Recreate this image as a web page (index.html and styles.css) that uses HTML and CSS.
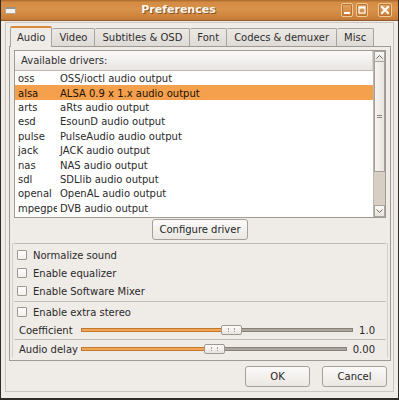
FILE: index.html
```html
<!DOCTYPE html>
<html>
<head>
<meta charset="utf-8">
<link rel="stylesheet" href="styles.css">
</head>
<body>
<div class="window">
  <div class="titlebar">
    <div class="win-icon"></div>
    <div class="title">Preferences</div>
    <div class="tb-buttons">
      <span class="tb-btn tb-min"><svg width="10" height="12" viewBox="0 0 10 12"><rect x="2" y="8" width="6" height="2" fill="#fff"/></svg></span>
      <span class="tb-btn tb-max"><svg width="10" height="12" viewBox="0 0 10 12"><rect x="2" y="3" width="6" height="6" fill="none" stroke="#fff" stroke-width="1.2"/><rect x="2" y="3" width="6" height="1.6" fill="#fff"/></svg></span>
      <span class="tb-btn tb-close"><svg width="12" height="12" viewBox="0 0 12 12"><path d="M3 3 L9 9 M9 3 L3 9" stroke="#fff" stroke-width="2" stroke-linecap="square"/></svg></span>
    </div>
  </div>
  <div class="client">
    <div class="frame">
      <div class="notebook">
        <div class="tabs">
          <div class="tab active">Audio</div>
          <div class="tab">Video</div>
          <div class="tab">Subtitles &amp; OSD</div>
          <div class="tab">Font</div>
          <div class="tab">Codecs &amp; demuxer</div>
          <div class="tab">Misc</div>
        </div>
        <div class="pane">
          <div class="list">
            <div class="list-main">
              <div class="list-header">Available drivers:</div>
              <div class="row"><span class="c1">oss</span><span class="c2">OSS/ioctl audio output</span></div>
              <div class="row selected"><span class="c1">alsa</span><span class="c2">ALSA 0.9 x 1.x audio output</span></div>
              <div class="row"><span class="c1">arts</span><span class="c2">aRts audio output</span></div>
              <div class="row"><span class="c1">esd</span><span class="c2">EsounD audio output</span></div>
              <div class="row"><span class="c1">pulse</span><span class="c2">PulseAudio audio output</span></div>
              <div class="row"><span class="c1">jack</span><span class="c2">JACK audio output</span></div>
              <div class="row"><span class="c1">nas</span><span class="c2">NAS audio output</span></div>
              <div class="row"><span class="c1">sdl</span><span class="c2">SDLlib audio output</span></div>
              <div class="row"><span class="c1">openal</span><span class="c2">OpenAL audio output</span></div>
              <div class="row"><span class="c1">mpegpes</span><span class="c2">DVB audio output</span></div>
            </div>
            <div class="scrollbar">
              <div class="sb-btn sb-up"><svg width="7" height="4" viewBox="0 0 7 4"><path d="M0.5 3.5 L3.5 0.5 L6.5 3.5" fill="none" stroke="#6b665f" stroke-width="1"/></svg></div>
              <div class="sb-thumb"><span class="grip"></span></div>
              <div class="sb-trough"></div>
              <div class="sb-btn sb-down"><svg width="7" height="4" viewBox="0 0 7 4"><path d="M0.5 0.5 L3.5 3.5 L6.5 0.5" fill="none" stroke="#6b665f" stroke-width="1"/></svg></div>
            </div>
          </div>
          <div class="btn-row"><button class="btn">Configure driver</button></div>
          <div class="lower">
            <div class="group g1">
              <div class="check-row"><span class="check"></span>Normalize sound</div>
              <div class="check-row"><span class="check"></span>Enable equalizer</div>
              <div class="check-row"><span class="check"></span>Enable Software Mixer</div>
            </div>
            <div class="group g2">
              <div class="check-row"><span class="check"></span>Enable extra stereo</div>
              <div class="slider-row">
                <span class="s-label">Coefficient</span>
                <div class="track"><div class="fill" style="width:55%"></div><div class="thumb" style="left:calc(55% - 10px)"><span class="tgrip"></span></div></div>
                <span class="s-value">1.0</span>
              </div>
            </div>
            <div class="group g3">
              <div class="slider-row">
                <span class="s-label">Audio delay</span>
                <div class="track"><div class="fill" style="width:50%"></div><div class="thumb" style="left:calc(50% - 10px)"><span class="tgrip"></span></div></div>
                <span class="s-value">0.00</span>
              </div>
            </div>
          </div>
        </div>
      </div>
      <div class="actions">
        <button class="btn act">OK</button>
        <button class="btn act">Cancel</button>
      </div>
    </div>
  </div>
</div>
</body>
</html>
```
FILE: styles.css
```css
* { box-sizing: border-box; }
html, body { margin: 0; padding: 0; }
body {
  width: 399px; height: 400px; overflow: hidden;
  background: #efebe7;
  font-family: "DejaVu Sans", "Liberation Sans", sans-serif;
  font-size: 10px; color: #2a2a2a;
}
.window {
  width: 399px; height: 400px;
  display: flex; flex-direction: column;
  border: 1px solid #2f2a25; border-top: none; border-bottom-width: 2px;
  background: #efebe7;
}
.titlebar {
  height: 21px; flex: none;
  display: flex; align-items: center;
  background: linear-gradient(#a9682c 0, #d48c44 12%, #d99249 45%, #cf8540 80%, #c17a36 100%);
  border-bottom: 1px solid #8d5b2b;
}
.win-icon {
  width: 11px; height: 7px; margin-left: 4px; margin-top: 1px;
  background: #f4f2ef; border: 1px solid #b9a58e; border-top: 2px solid #9a9086;
}
.title {
  flex: 1; text-align: center;
  font-weight: bold; font-size: 11px; color: #fbf6ee;
  text-shadow: 1px 1px 0 #8a5522;
  padding-bottom: 1px;
}
.tb-buttons { display: flex; align-items: center; margin-right: 6px; }
.tb-btn {
  display: flex; align-items: center; justify-content: center;
  height: 14px; width: 12px;
  border: 1px solid #f1c996; border-radius: 2px;
  background: linear-gradient(#e3a562, #c87e37);
  box-shadow: inset 0 0 0 1px #b8742f;
}
.tb-max { margin-left: 3px; }
.tb-close { margin-left: 10px; width: 14px; }
.tb-btn svg { display: block; }

.client {
  flex: 1; display: flex; flex-direction: column;
  padding: 1px 4px 6px 4px;
}
.frame {
  flex: 1; display: flex; flex-direction: column;
  border: 1px solid #cbc6c0;
}
.notebook { padding: 3px 2px 0 3px; }
.tabs {
  height: 20px; display: flex; align-items: flex-end;
  padding-left: 1px; position: relative; z-index: 1;
}
.tab {
  height: 18px; padding: 0 7px;
  display: flex; align-items: center;
  border: 1px solid #a8a39d; border-bottom: none; border-left: none;
  border-radius: 2px 2px 0 0;
  background: linear-gradient(#ece8e4, #dedad5);
  color: #2f2f2f; white-space: nowrap;
}
.tab.active {
  height: 21px; margin-bottom: -1px;
  border-left: 1px solid #a8a39d;
  border-top: 2px solid #d7893c;
  background: #efebe7;
  padding: 0 6px;
}
.pane {
  height: 315px;
  border: 1px solid #9e9993;
  background: #efebe7;
  padding: 3px 4px 0 4px;
  display: flex; flex-direction: column;
}
.list {
  height: 168px; display: flex;
  border: 1px solid #9f9a94;
  background: #fff;
}
.list-main { flex: 1; overflow: hidden; }
.list-header {
  height: 20px; padding: 4px 0 0 6px;
  background: linear-gradient(#fbfaf9, #e9e6e2);
  border-bottom: 1px solid #bdb8b2;
  border-right: 1px solid #d6d2cd;
  color: #2f2f2f;
}
.row { height: 14.4px; display: flex; align-items: center; white-space: nowrap; color: #2a2a2a; padding-top: 1px; }
.row.selected { background: #f5a04c; color: #1a1208; }
.c1 { width: 42px; padding-left: 3px; overflow: hidden; flex: none; }
.c2 { padding-left: 3px; }

.scrollbar {
  width: 12px; flex: none; display: flex; flex-direction: column;
  background: #d8cfc4; border-left: 1px solid #bdb6ad;
}
.sb-btn {
  height: 11px; flex: none; display: flex; align-items: center; justify-content: center;
  background: linear-gradient(#fbfaf8, #e7e3de);
  border: 1px solid #aaa49d;
}
.sb-down { height: 12px; }
.sb-thumb {
  height: 110px; flex: none; display: flex; align-items: center; justify-content: center;
  background: linear-gradient(90deg, #f6f4f1, #e9e5e0);
  border: 1px solid #a49e97; border-top: none;
}
.grip { width: 5px; height: 3px; border-top: 1px solid #8d8780; border-bottom: 1px solid #8d8780; }
.sb-trough { flex: 1; }

.btn-row { display: flex; justify-content: center; margin-top: 1px; }
.btn {
  height: 21px; padding: 0 6px;
  font-family: inherit; font-size: 10px; color: #262626;
  border: 1px solid #a5a09a; border-radius: 3px;
  background: linear-gradient(#fbfaf9, #ebe7e2);
}
.lower {
  margin: 3px -2px 0 -2px;
  border-left: 1px solid #d3cfc9; border-right: 1px solid #d3cfc9;
  padding: 0 1px;
}
.group { border-top: 1px solid #c2bdb7; }
.g1 { padding: 2px 0 1px; }
.g2 { padding: 1px 0 0; }
.check-row { height: 18px; display: flex; align-items: center; color: #2a2a2a; }
.check {
  width: 10px; height: 10px; margin: 0 6px 0 3px;
  border: 1px solid #9c978f; border-radius: 1px;
  background: linear-gradient(#ffffff, #f1eeea);
}
.slider-row { height: 18px; display: flex; align-items: center; padding: 0 11px 0 5px; color: #2a2a2a; }
.s-label { width: 62px; flex: none; }
.track {
  flex: 1; height: 4px; position: relative;
  background: #aca69f; border: 1px solid #878179;
}
.fill {
  position: absolute; left: -1px; top: -1px; bottom: -1px;
  background: #f3a552; border: 1px solid #c07836;
}
.thumb {
  position: absolute; top: -4px; width: 21px; height: 10px;
  border: 1px solid #9d9891; border-radius: 2px;
  background: linear-gradient(#fdfcfb, #e8e4df);
  display: flex; align-items: center; justify-content: center;
}
.tgrip { width: 7px; height: 4px; border-left: 1px dotted #a39d96; border-right: 1px dotted #a39d96; }
.s-value { margin-left: 6px; }

.actions {
  display: flex; justify-content: flex-end; gap: 12px;
  padding: 5px 6px 0 0;
}
.btn.act { width: 65px; padding: 0; }
```
